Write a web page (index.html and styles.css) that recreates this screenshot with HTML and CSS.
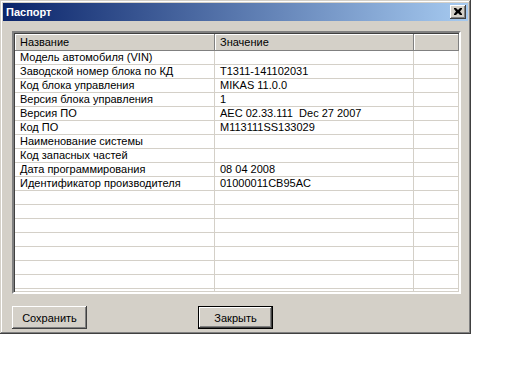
FILE: index.html
```html
<!DOCTYPE html>
<html>
<head>
<meta charset="utf-8">
<link rel="stylesheet" href="styles.css">
</head>
<body>
<div class="window">
  <div class="titlebar">
    <span class="title">Паспорт</span>
    <span class="close">
      <svg width="8" height="7" viewBox="0 0 8 7"><path d="M0 0h2l2 2 2-2h2v1L6 3.5 8 6v1H6L4 5 2 7H0V6l2-2.5L0 1z" fill="#000"/></svg>
    </span>
  </div>
  <div class="content">
    <div class="list">
      <div class="row head">
        <div class="c1">Название</div><div class="c2">Значение</div><div class="c3"></div>
      </div>
      <div class="row"><div class="c1">Модель автомобиля (VIN)</div><div class="c2"></div><div class="c3"></div></div>
      <div class="row"><div class="c1">Заводской номер блока по КД</div><div class="c2">T1311-141102031</div><div class="c3"></div></div>
      <div class="row"><div class="c1">Код блока управления</div><div class="c2">MIKAS 11.0.0</div><div class="c3"></div></div>
      <div class="row"><div class="c1">Версия блока управления</div><div class="c2">1</div><div class="c3"></div></div>
      <div class="row"><div class="c1">Версия ПО</div><div class="c2">AEC 02.33.111&nbsp; Dec 27 2007</div><div class="c3"></div></div>
      <div class="row"><div class="c1">Код ПО</div><div class="c2">M113111SS133029</div><div class="c3"></div></div>
      <div class="row"><div class="c1">Наименование системы</div><div class="c2"></div><div class="c3"></div></div>
      <div class="row"><div class="c1">Код запасных частей</div><div class="c2"></div><div class="c3"></div></div>
      <div class="row"><div class="c1">Дата программирования</div><div class="c2">08 04 2008</div><div class="c3"></div></div>
      <div class="row"><div class="c1">Идентификатор производителя</div><div class="c2">01000011CB95AC</div><div class="c3"></div></div>
      <div class="row"><div class="c1"></div><div class="c2"></div><div class="c3"></div></div>
      <div class="row"><div class="c1"></div><div class="c2"></div><div class="c3"></div></div>
      <div class="row"><div class="c1"></div><div class="c2"></div><div class="c3"></div></div>
      <div class="row"><div class="c1"></div><div class="c2"></div><div class="c3"></div></div>
      <div class="row"><div class="c1"></div><div class="c2"></div><div class="c3"></div></div>
      <div class="row"><div class="c1"></div><div class="c2"></div><div class="c3"></div></div>
      <div class="row"><div class="c1"></div><div class="c2"></div><div class="c3"></div></div>
      <div class="row"><div class="c1"></div><div class="c2"></div><div class="c3"></div></div>
    </div>
    <div class="buttons">
      <div class="btn">Сохранить</div>
      <div class="btn default">Закрыть</div>
    </div>
  </div>
</div>
</body>
</html>
```
FILE: styles.css
```css
body {
  margin: 0;
  background: #fff;
  font-family: "Liberation Sans", Arial, sans-serif;
  font-size: 11px;
  color: #000;
}
.window {
  width: 471px;
  height: 334px;
  box-sizing: border-box;
  padding: 3px;
  background: #d4d0c8;
  box-shadow: inset -1px -1px #404040, inset 1px 1px #d4d0c8, inset -2px -2px #808080, inset 2px 2px #fff;
  display: flex;
  flex-direction: column;
}
.titlebar {
  height: 18px;
  background: linear-gradient(to right, #0a246a, #a6caf0);
  display: flex;
  align-items: center;
  justify-content: space-between;
  padding: 0 2px 0 3px;
}
.title {
  color: #fff;
  font-weight: bold;
  font-size: 11px;
}
.close {
  width: 16px;
  height: 14px;
  box-sizing: border-box;
  background: #d4d0c8;
  box-shadow: inset -1px -1px #404040, inset 1px 1px #fff, inset -2px -2px #808080;
  display: flex;
  align-items: center;
  justify-content: center;
  padding-bottom: 1px;
}
.content {
  flex: 1;
  padding: 10px 0 0 9px;
  display: flex;
  flex-direction: column;
}
.list {
  width: 449px;
  height: 263px;
  box-sizing: border-box;
  background: #fff;
  border-style: solid;
  border-width: 2px;
  border-color: #808080 #fff #fff #808080;
  box-shadow: inset 1px 1px #404040, inset -1px -1px #d4d0c8;
  overflow: hidden;
  padding: 1px 0 0 1px;
}
.row {
  display: flex;
  height: 14px;
  line-height: 13px;
  box-sizing: border-box;
  border-bottom: 1px solid #d4d0c8;
}
.row > div {
  box-sizing: border-box;
  padding-left: 5px;
  white-space: nowrap;
  overflow: hidden;
}
.c1 { width: 200px; border-right: 1px solid #d4d0c8; }
.c2 { width: 199px; border-right: 1px solid #d4d0c8; padding-left: 4px; }
.c3 { flex: 1; }
.row.head {
  height: 17px;
  line-height: 16px;
  background: #d4d0c8;
  border-bottom: 1px solid #808080;
}
.row.head > div {
  border-right: 1px solid #808080;
  box-shadow: inset 1px 1px #fff;
}
.buttons {
  display: flex;
  margin-top: 12px;
  gap: 111px;
  padding-left: 0;
}
.btn {
  width: 75px;
  height: 23px;
  box-sizing: border-box;
  background: #d4d0c8;
  box-shadow: inset -1px -1px #404040, inset 1px 1px #fff, inset -2px -2px #808080;
  display: flex;
  align-items: center;
  justify-content: center;
}
.btn.default {
  border: 1px solid #000;
}
```
